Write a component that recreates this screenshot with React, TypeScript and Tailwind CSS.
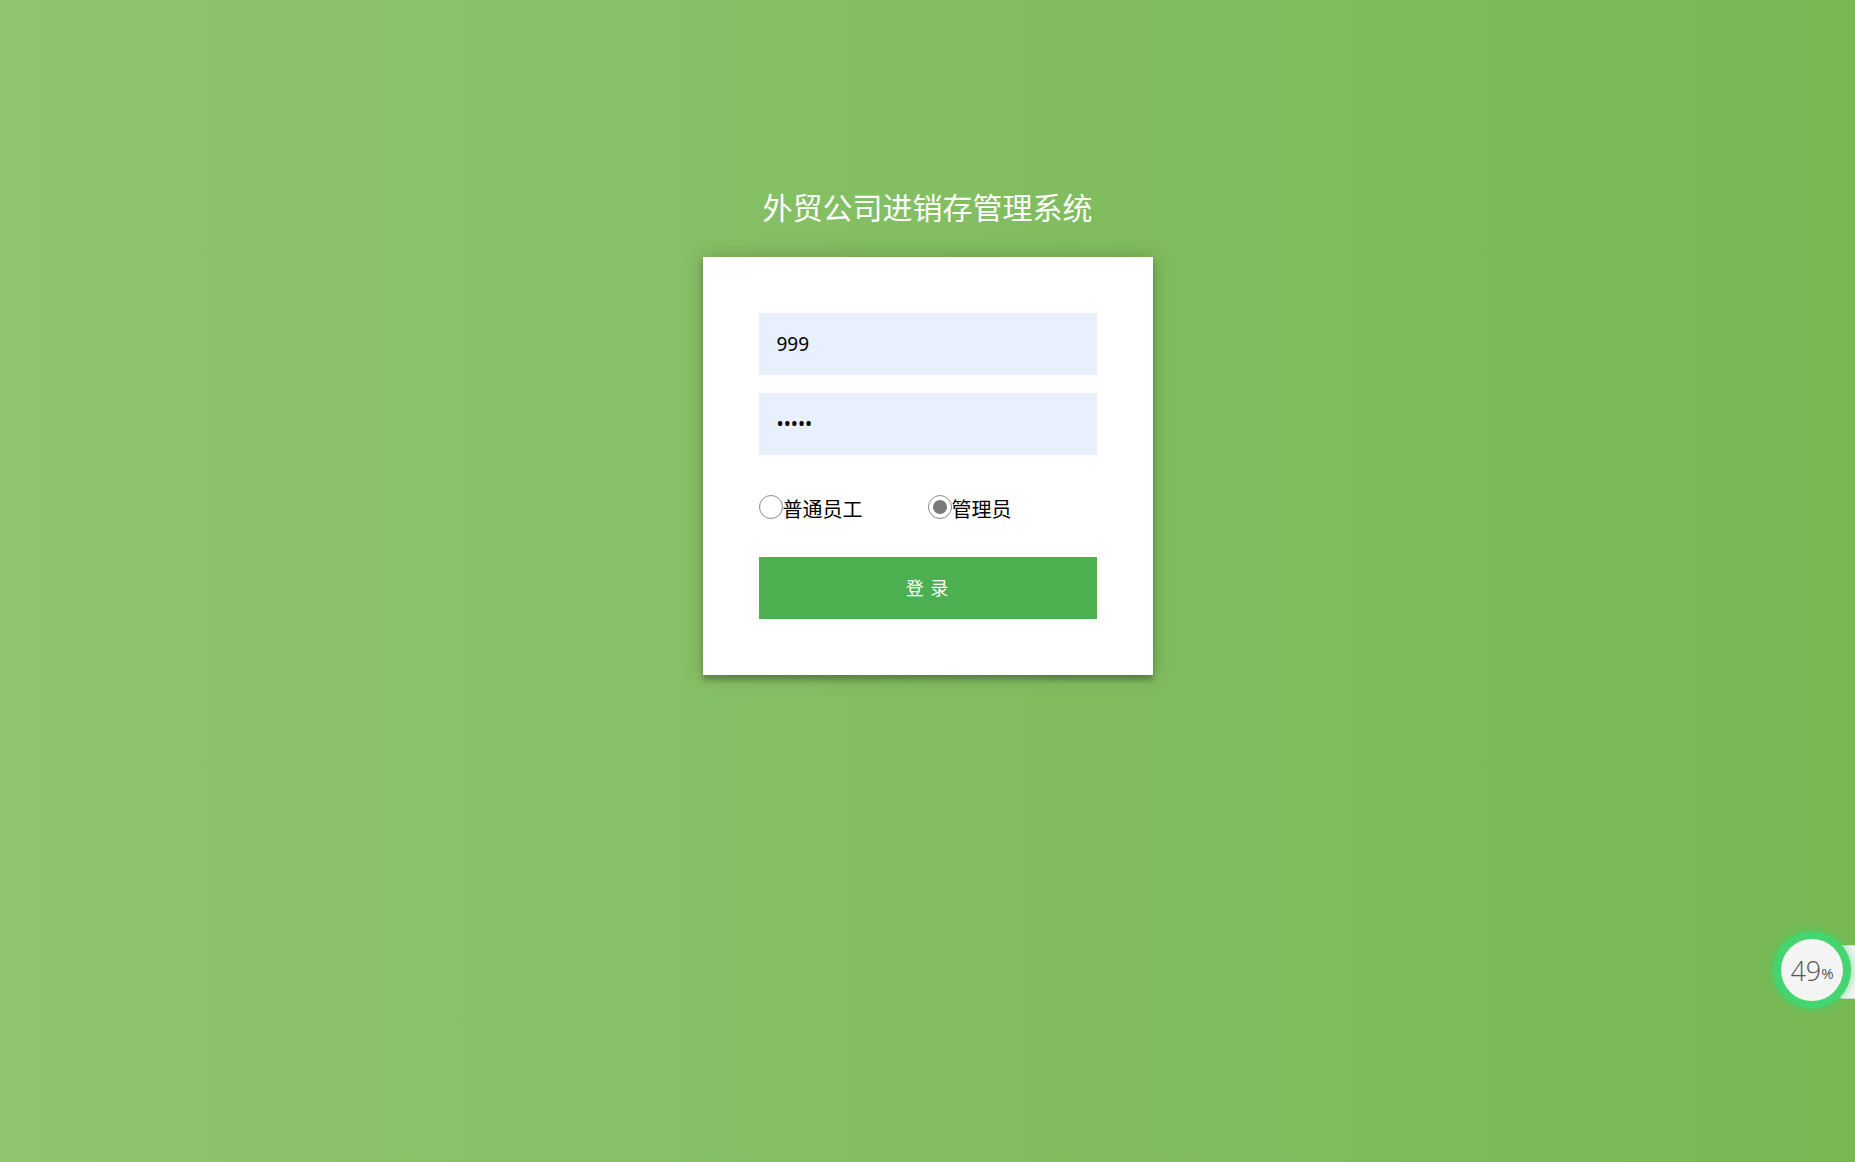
import { useState } from "react";

const FONT = { fontFamily: '"Noto Sans", "Noto Sans CJK SC", sans-serif' };

function Radio({
  checked,
  label,
  onClick,
}: {
  checked: boolean;
  label: string;
  onClick: () => void;
}) {
  return (
    <label className="flex cursor-pointer items-center" onClick={onClick}>
      <span className="flex h-6 w-6 items-center justify-center rounded-full border-[1.5px] border-[#8a8a8a] bg-white">
        {checked && <span className="h-[14px] w-[14px] rounded-full bg-[#7a7a7a]" />}
      </span>
      <span className="mt-[6px] text-[20px] leading-none text-black">{label}</span>
    </label>
  );
}

export default function App() {
  const [role, setRole] = useState<"staff" | "admin">("admin");
  const [username, setUsername] = useState("999");
  const [password, setPassword] = useState("12345");

  return (
    <div
      className="relative min-h-[1162px] w-full overflow-hidden bg-gradient-to-r from-[#8fc470] to-[#77b853]"
      style={FONT}
    >
      <div className="flex flex-col items-center pt-[188px]">
        <h1 className="mb-[29px] text-[30px] font-normal leading-[40px] text-white">
          外贸公司进销存管理系统
        </h1>

        <form
          className="flex w-[450px] flex-col bg-white p-[56px] shadow-[0_0_20px_rgba(0,0,0,0.2),0_5px_5px_rgba(0,0,0,0.24)]"
          onSubmit={(e) => e.preventDefault()}
        >
          <input
            type="text"
            value={username}
            onChange={(e) => setUsername(e.target.value)}
            className="h-[62px] w-full bg-[#e8f0fd] px-[18px] text-[19px] text-black outline-none"
          />
          <input
            type="password"
            value={password}
            onChange={(e) => setPassword(e.target.value)}
            className="mt-[18px] h-[62px] w-full bg-[#e8f0fd] px-[18px] text-[19px] text-black outline-none"
          />

          <div className="mt-[39px] flex h-[25px] items-center">
            <div className="w-[169px]">
              <Radio checked={role === "staff"} label="普通员工" onClick={() => setRole("staff")} />
            </div>
            <Radio checked={role === "admin"} label="管理员" onClick={() => setRole("admin")} />
          </div>

          <button
            type="submit"
            className="mt-[38px] h-[62px] w-full bg-[#4caf50] text-[18px] tracking-[1px] text-white"
          >
            登 录
          </button>
        </form>
      </div>

      {/* floating speed ball, bottom right */}
      <div className="absolute right-0 top-[945px] h-[54px] w-[16px] rounded-l-sm border border-r-0 border-[#dcdcdc] bg-[#f6f6f6]" />
      <div className="absolute left-[1773px] top-[931px] flex h-[78px] w-[78px] items-center justify-center rounded-full bg-[#45d46f] shadow-[0_0_10px_rgba(60,210,100,0.8)]">
        <div className="flex h-[62px] w-[62px] items-center justify-center rounded-full bg-[#f4f4f4]">
          <span className="text-[27px] font-light leading-none text-[#555]" style={{ fontFamily: '"Open Sans", sans-serif' }}>
            49
          </span>
          <span className="mt-[7px] text-[15px] leading-none text-[#555]" style={{ fontFamily: '"Open Sans", sans-serif' }}>
            %
          </span>
        </div>
      </div>
    </div>
  );
}
